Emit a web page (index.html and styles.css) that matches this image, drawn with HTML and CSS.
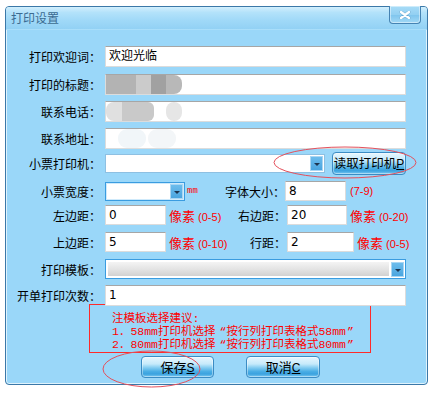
FILE: index.html
```html
<!DOCTYPE html>
<html lang="zh-CN">
<head>
  <meta charset="UTF-8" />
  <title>打印设置</title>
  <link rel="stylesheet" href="styles.css">
</head>
<body>

<div class="dialog">
  <div class="titlebar">
    <span class="title">打印设置</span>
    <span class="close">
      <svg width="12" height="8" viewBox="0 0 12 8">
        <path d="M2 1 L10 7 M10 1 L2 7" stroke="#2f6f9f" stroke-width="3.4" stroke-linecap="round" opacity="0.35"/>
        <path d="M2 1 L10 7 M10 1 L2 7" stroke="#fff" stroke-width="2.4" stroke-linecap="round"/>
      </svg>
    </span>
  </div>

  <div class="content">
    <div class="form">
      <div class="row">
        <label class="lbl">打印欢迎词：</label>
        <div class="field wide">欢迎光临</div>
      </div>
      <div class="row">
        <label class="lbl">打印的标题：</label>
        <div class="field wide">
          <span class="mosaic">
            <i class="m1"></i><i class="m2"></i><i class="m3"></i><i class="m4"></i>
          </span>
        </div>
      </div>
      <div class="row">
        <label class="lbl">联系电话：</label>
        <div class="field wide">
          <span class="mosaic">
            <i class="p1"></i><i class="p2"></i><i class="p3"></i><i class="p4"></i>
          </span>
        </div>
      </div>
      <div class="row">
        <label class="lbl">联系地址：</label>
        <div class="field wide">
          <span class="mosaic">
            <i class="q1"></i><i class="q2"></i>
          </span>
        </div>
      </div>
      <div class="row">
        <label class="lbl">小票打印机：</label>
        <div class="select printer"><span class="arrow"></span></div>
        <button class="btn read">读取打印机<u>P</u></button>
      </div>
      <div class="row">
        <label class="lbl">小票宽度：</label>
        <div class="select small"><span class="arrow"></span></div>
        <span class="unit mm">mm</span>
        <label class="lbl2">字体大小：</label>
        <div class="field num">8</div>
        <span class="hint">(7-9)</span>
      </div>
      <div class="row">
        <label class="lbl">左边距：</label>
        <div class="field num">0</div>
        <span class="unit"><b>像素</b> (0-5)</span>
        <label class="lbl2">右边距：</label>
        <div class="field num shift">20</div>
        <span class="unit tail"><b>像素</b> (0-20)</span>
      </div>
      <div class="row">
        <label class="lbl">上边距：</label>
        <div class="field num">5</div>
        <span class="unit"><b>像素</b> (0-10)</span>
        <label class="lbl2">行距：</label>
        <div class="field num shift long">2</div>
        <span class="unit tail"><b>像素</b> (0-5)</span>
      </div>
      <div class="row">
        <label class="lbl">打印模板：</label>
        <div class="select template"><span class="fill"></span><span class="arrow"></span></div>
      </div>
      <div class="row">
        <label class="lbl">开单打印次数：</label>
        <div class="field wide">1</div>
      </div>
    </div>

    <div class="note">
      <div>注模板选择建议:</div>
      <div>1．58mm打印机选择<span class="qo">“</span>按行列打印表格式58mm<span class="qc">”</span></div>
      <div>2．80mm打印机选择<span class="qo">“</span>按行列打印表格式80mm<span class="qc">”</span></div>
    </div>

    <div class="actions">
      <button class="btn">保存<u>S</u></button>
      <button class="btn">取消<u>C</u></button>
    </div>
  </div>
</div>

<!-- red marks drawn over the screenshot -->
<svg class="marks" width="446" height="398" viewBox="0 0 446 398">
  <ellipse cx="345" cy="162.5" rx="71" ry="15.5" fill="none" stroke="#e4505c" stroke-width="1"/>
  <ellipse cx="151.5" cy="369" rx="48.5" ry="18" fill="none" stroke="#e4505c" stroke-width="1"/>
</svg>

</body>
</html>
```

FILE: styles.css
```css
* {
  box-sizing: border-box;
}
body {
  margin: 0;
  background: #fff;
  font-family: "Noto Sans CJK SC", sans-serif;
  font-size: 12px;
  color: #000;
  position: relative;
  width: 446px;
  height: 398px;
  overflow: hidden;
}
.dialog {
  margin: 6px 0 0 5px;
  width: 423px;
  height: 379px;
  border: 1px solid #3b78a8;
  border-radius: 4px;
  background: #9ad7f9;
  box-shadow: inset 0 0 0 1px #dff3fd;
  display: flex;
  flex-direction: column;
}
.titlebar {
  height: 23px;
  display: flex;
  align-items: center;
  padding-left: 5px;
  border-radius: 3px 3px 0 0;
  background: linear-gradient(to bottom, #d2effd 0%, #b3e2fa 25%, #a0d9f8 60%, #92d1f4 100%);
  border-bottom: 1px solid #a9defa;
}
.title {
  color: #3b6b91;
  font-size: 12px;
  line-height: 14px;
}
.close {
  margin-left: auto;
  margin-right: 6px;
  align-self: flex-start;
  margin-top: -1px;
  width: 32px;
  height: 18px;
  border: 1px solid #4583b3;
  border-top: none;
  border-radius: 0 0 4px 4px;
  background: linear-gradient(to bottom, #a8dcf7 0%, #93d0f2 50%, #80c6ee 55%, #a2d8f5 100%);
  box-shadow: inset 0 0 0 1px rgba(255, 255, 255, 0.45);
  display: flex;
  align-items: center;
  justify-content: center;
}
.content {
  padding: 16px 0 0 6px;
  flex: 1;
}
.form {
  display: grid;
  grid-template-rows: 28px 27px 27px 24px 29px 24px 27px 27px 26px 21px;
}
.row {
  display: flex;
  align-items: center;
  align-self: start;
}
.lbl {
  width: 89px;
  margin-right: 4px;
  text-align: right;
  flex-shrink: 0;
  white-space: nowrap;
}
.lbl2 {
  width: 60px;
  text-align: right;
  flex-shrink: 0;
  white-space: nowrap;
}
.field {
  height: 21px;
  background: #fff;
  border: 1px solid #dcdcdc;
  border-top-color: #a6a6a6;
  padding: 1px 3px;
  line-height: 17px;
  font-family: "DejaVu Sans", "Noto Sans CJK SC", sans-serif;
  display: flex;
  align-items: center;
  align-self: flex-start;
}
.wide {
  width: 301px;
}
.num {
  width: 61px;
  height: 20px;
  align-items: flex-start;
}
.num.shift {
  width: 60px;
  margin-left: 1px;
}
.num.long {
  width: 67px;
}

/* blurred-out values */
.mosaic {
  display: flex;
  height: 19px;
  margin-left: -3px;
}
.mosaic i {
  display: block;
  height: 19px;
}
.m1 { width: 30px; background: #b3b3b3; }
.m2 { width: 15px; background: #cbcbcb; }
.m3 { width: 15px; background: #a1a1a1; }
.m4 { width: 16px; background: #b8b8b8; border-radius: 0 8px 8px 0; }
.p1 { width: 16px; background: #e0e0e0; border-radius: 8px 0 0 8px; }
.p2 { width: 32px; background: #c9c9c9; border-radius: 0 6px 6px 0; }
.p3 { width: 12px; background: #fff; }
.p4 { width: 16px; background: #e6e6e6; border-radius: 8px; }
.q1 { width: 28px; margin-left: 12px; background: #f1f6f9; border-radius: 9px; }
.q2 { width: 28px; margin-left: 2px; background: #f3f6f8; border-radius: 9px; }

.select {
  height: 19px;
  background: #fff;
  border: 1px solid #8ec0e2;
  display: flex;
  justify-content: flex-end;
  align-items: center;
  padding-right: 1px;
}
.printer {
  width: 220px;
}
.small {
  width: 80px;
  border-color: #3a9ce0;
  box-shadow: inset 0 0 0 1px #cfeafb;
}
.template {
  width: 301px;
  height: 20px;
  border-color: #3a9ce0;
  padding: 2px 1px 2px 2px;
  background: #fff;
}
.template .fill {
  flex: 1;
  height: 14px;
  margin-right: 2px;
  background: linear-gradient(to bottom, #f4f4f4 0%, #e4e4e4 50%, #d2d2d2 100%);
}
.arrow {
  width: 13px;
  height: 15px;
  border: 1px solid #a9d6f3;
  background: linear-gradient(to bottom, #6cbcec 0%, #4aa5df 100%);
  display: flex;
  align-items: center;
  justify-content: center;
  flex-shrink: 0;
}
.arrow::after {
  content: "";
  border-left: 3px solid transparent;
  border-right: 3px solid transparent;
  border-top: 3px solid #1c3550;
  margin-top: 2px;
}

.unit {
  color: #ff0000;
  font-family: "Liberation Sans", "Noto Sans CJK SC", sans-serif;
  font-size: 11px;
  white-space: nowrap;
  width: 57px;
  margin-left: 3px;
  flex-shrink: 0;
}
.unit b {
  font-weight: normal;
  font-family: "Noto Sans CJK SC", sans-serif;
  font-size: 13px;
}
.unit.tail {
  width: auto;
}
.unit.mm {
  font-family: "Liberation Mono", monospace;
  font-size: 9px;
  width: 38px;
  margin-left: 2px;
}
.hint {
  color: #ff0000;
  font-family: "Liberation Sans", sans-serif;
  font-size: 11px;
  margin-left: 4px;
}

.btn {
  height: 22px;
  width: 73px;
  padding: 0;
  border: 1px solid #3b8cc4;
  border-radius: 4px;
  background: linear-gradient(to bottom, #e8f7fe 0%, #c6eafb 35%, #8fd2f3 50%, #4aaee5 72%, #3aa2df 85%, #7dcaf1 100%);
  box-shadow: inset 0 0 0 1px rgba(255, 255, 255, 0.4);
  font-family: "Noto Sans CJK SC", sans-serif;
  font-size: 13px;
  line-height: 18px;
  color: #000;
}
.btn u {
  font-family: "Liberation Sans", sans-serif;
  font-size: 12px;
}
.btn.read {
  width: 74px;
  height: 23px;
  margin-left: 7px;
  font-size: 12.5px;
}

.note {
  margin: -2px 0 0 77px;
  width: 282px;
  height: 49px;
  border: 1px solid #ff2a2a;
  padding: 7px 0 0 22px;
  color: #ff0000;
  font-family: "Liberation Mono", "Noto Sans CJK SC", monospace;
  font-size: 11.5px;
  line-height: 13px;
  white-space: nowrap;
}
.note .qo {
  padding-left: 4px;
}
.note .qc {
  padding-left: 1px;
}
.actions {
  display: flex;
  gap: 32px;
  margin-top: 3px;
  padding-left: 129px;
}
.actions .btn + .btn {
  width: 74px;
}

.marks {
  position: absolute;
  top: 0;
  left: 0;
  pointer-events: none;
}
```
